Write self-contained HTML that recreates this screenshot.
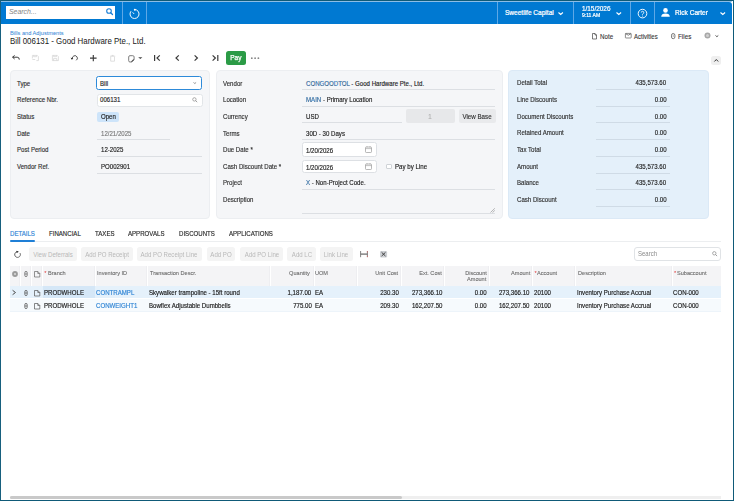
<!DOCTYPE html>
<html><head><meta charset="utf-8">
<style>
*{box-sizing:border-box;margin:0;padding:0}
html,body{width:734px;height:501px;overflow:hidden;background:#fff}
body{position:relative;font-family:"Liberation Sans",sans-serif;color:#222}
.t{position:absolute;white-space:nowrap;line-height:normal}
.r{position:absolute}
svg.r{overflow:visible}
</style></head><body>
<div class="r" style="left:1.00px;top:1.00px;width:731.00px;height:1.00px;background:#8cbde6;border-top-right-radius:4px"></div><div class="r" style="left:1.00px;top:2.00px;width:731.00px;height:21.50px;background:#0079d2;border-top-right-radius:3px"></div><div class="r" style="left:6.00px;top:6.00px;width:109.00px;height:13.00px;background:#fff"></div><div class="t" style="left:8.80px;top:6.91px;font-size:7.75px;color:#8a8a8a;-webkit-text-stroke:0.05px #8a8a8a;transform:scaleX(0.890);transform-origin:0 0;font-style:italic">Search...</div><svg class="r" style="left:106.00px;top:8.20px" width="7" height="7" viewBox="0 0 7 7"><circle cx="3" cy="3" r="2.3" fill="none" stroke="#1a7fd6" stroke-width="1.1"/><path d="M4.7 4.7 L6.5 6.5" stroke="#1a7fd6" stroke-width="1.3" stroke-linecap="round"/></svg><div class="r" style="left:122.00px;top:1.50px;width:1.00px;height:22.00px;background:#5ea8e6"></div><div class="r" style="left:145.50px;top:1.50px;width:1.00px;height:22.00px;background:#5ea8e6"></div><div class="r" style="left:497.40px;top:1.50px;width:1.00px;height:22.00px;background:#5ea8e6"></div><div class="r" style="left:573.30px;top:1.50px;width:1.00px;height:22.00px;background:#5ea8e6"></div><div class="r" style="left:629.80px;top:1.50px;width:1.00px;height:22.00px;background:#5ea8e6"></div><div class="r" style="left:653.50px;top:1.50px;width:1.00px;height:22.00px;background:#5ea8e6"></div><svg class="r" style="left:127.80px;top:7.65px" width="12" height="12" viewBox="0 0 12 12"><path d="M3.0 3.2 A4.5 4.5 0 1 0 6.6 1.5" fill="none" stroke="#fff" stroke-width="0.95"/><circle cx="6.8" cy="1.7" r="0.95" fill="#fff"/><path d="M6.2 6.0 L4.6 4.3" stroke="#fff" stroke-width="0.9"/></svg><div class="t" style="left:505.20px;top:8.96px;font-size:6.61px;color:#fff;-webkit-text-stroke:0.22px #fff;transform:scaleX(0.990);transform-origin:0 0;">Sweetlife Capital</div><svg class="r" style="left:558.20px;top:12.20px" width="5.4" height="3.0" viewBox="0 0 5.4 3.0"><path d="M0.5 0.5 L2.7 2.5 L4.9 0.5" fill="none" stroke="#fff" stroke-width="1.1"/></svg><div class="t" style="left:581.90px;top:4.80px;font-size:6.45px;color:#fff;-webkit-text-stroke:0.2px #fff;transform:translateZ(0);">1/15/2026</div><div class="t" style="left:581.90px;top:12.43px;font-size:5.10px;color:#fff;-webkit-text-stroke:0.2px #fff;transform:translateZ(0);">9:11 AM</div><svg class="r" style="left:616.00px;top:12.30px" width="5.6" height="3.0" viewBox="0 0 5.6 3.0"><path d="M0.5 0.5 L2.8 2.5 L5.1 0.5" fill="none" stroke="#fff" stroke-width="1.1"/></svg><svg class="r" style="left:637.30px;top:7.50px" width="11" height="11" viewBox="0 0 11 11"><circle cx="5.5" cy="5.6" r="4.3" fill="none" stroke="#fff" stroke-width="0.95"/><path d="M4.3 4.5 A1.25 1.25 0 1 1 5.9 5.7 L5.5 6.1 L5.5 6.8" fill="none" stroke="#fff" stroke-width="0.85"/><circle cx="5.5" cy="7.9" r="0.5" fill="#fff"/></svg><svg class="r" style="left:661.00px;top:7.50px" width="9" height="9" viewBox="0 0 9 9"><circle cx="4.5" cy="2.4" r="2.3" fill="#fff"/><path d="M0.2 8.8 Q0.4 5.6 4.5 5.6 Q8.6 5.6 8.8 8.8 Z" fill="#fff"/></svg><div class="t" style="left:675.00px;top:8.96px;font-size:6.60px;color:#fff;-webkit-text-stroke:0.22px #fff;transform:translateZ(0);">Rick Carter</div><svg class="r" style="left:719.80px;top:11.50px" width="5.6" height="3.0" viewBox="0 0 5.6 3.0"><path d="M0.5 0.5 L2.8 2.5 L5.1 0.5" fill="none" stroke="#fff" stroke-width="1.1"/></svg><div class="t" style="left:9.60px;top:29.32px;font-size:6.21px;color:#3b8bd8;-webkit-text-stroke:0.05px #3b8bd8;transform:scaleX(0.910);transform-origin:0 0;">Bills and Adjustments</div><div class="t" style="left:9.50px;top:36.09px;font-size:8.32px;color:#222;-webkit-text-stroke:0.03px #222;transform:scaleX(0.950);transform-origin:0 0;">Bill 006131 - Good Hardware Pte., Ltd.</div><svg class="r" style="left:591.50px;top:32.60px" width="5" height="6.5" viewBox="0 0 5 6.5"><path d="M0.5 0.5 H3 L4.5 2 V6 H0.5 Z M3 0.5 V2 H4.5" fill="none" stroke="#444" stroke-width="0.7"/></svg><div class="t" style="left:599.70px;top:32.60px;font-size:6.67px;color:#333;-webkit-text-stroke:0.1px #333;transform:scaleX(0.930);transform-origin:0 0;">Note</div><svg class="r" style="left:625.30px;top:33.20px" width="6.6" height="5.4" viewBox="0 0 6.6 5.4"><rect x="0.4" y="0.4" width="5.8" height="4.6" rx="0.5" fill="none" stroke="#666" stroke-width="0.75"/><path d="M0.6 0.7 L3.3 2.2 L6.0 0.7" fill="none" stroke="#555" stroke-width="0.75"/></svg><div class="t" style="left:633.50px;top:32.80px;font-size:6.45px;color:#333;-webkit-text-stroke:0.1px #333;transform:scaleX(0.930);transform-origin:0 0;">Activities</div><svg class="r" style="left:671.30px;top:33.00px" width="4.5" height="6" viewBox="0 0 4.5 6"><rect x="0.5" y="0.5" width="3.4" height="5.2" rx="1.7" fill="none" stroke="#666" stroke-width="0.85"/><path d="M2.2 1.6 V4.0" stroke="#777" stroke-width="0.6"/></svg><div class="t" style="left:678.10px;top:32.50px;font-size:6.77px;color:#333;-webkit-text-stroke:0.1px #333;transform:scaleX(0.930);transform-origin:0 0;">Files</div><svg class="r" style="left:703.90px;top:32.40px" width="7" height="7" viewBox="0 0 7 7"><circle cx="3.5" cy="3.5" r="3.0" fill="#a8a8a8"/><circle cx="3.5" cy="3.5" r="1.5" fill="#d0d0d0"/></svg><svg class="r" style="left:714.50px;top:35.00px" width="3.8" height="2.2" viewBox="0 0 3.8 2.2"><path d="M0.5 0.5 L1.9 1.7000000000000002 L3.3 0.5" fill="none" stroke="#555" stroke-width="1.0"/></svg><svg class="r" style="left:12.40px;top:55.20px" width="8" height="5.5" viewBox="0 0 8 5.5"><path d="M2.6 0.4 L0.6 2.2 L2.6 4.0 M0.6 2.2 H5.2 Q7.3 2.2 7.3 4.6" fill="none" stroke="#3a3a3a" stroke-width="1"/></svg><svg class="r" style="left:32.00px;top:54.90px" width="7" height="6" viewBox="0 0 7 6"><path d="M0.4 3.4 V0.4 H5.2 L6.4 1.6 V5.6 H4.4 M1.6 0.4 V1.7 H4.6 V0.4 M0.4 4.5 H3.2" fill="none" stroke="#d4d4d4" stroke-width="0.75"/></svg><svg class="r" style="left:51.60px;top:54.90px" width="7" height="6" viewBox="0 0 7 6"><path d="M0.4 0.4 H5.2 L6.4 1.6 V5.6 H0.4 Z M1.6 0.4 V1.7 H4.6 V0.4 M1.6 5.6 V3.6 H4.8 V5.6" fill="none" stroke="#d4d4d4" stroke-width="0.75"/></svg><svg class="r" style="left:70.20px;top:54.90px" width="8" height="6" viewBox="0 0 8 6"><path d="M2.5 3.9 A2.5 2.5 0 1 1 6.2 5.3" fill="none" stroke="#555" stroke-width="1.0"/><path d="M0.7 2.6 L1.4 4.5 L3.3 4.0 Z" fill="#222"/></svg><svg class="r" style="left:89.80px;top:54.90px" width="6.6" height="6.2" viewBox="0 0 6.6 6.2"><path d="M3.3 0 V6.2 M0 3.1 H6.6" stroke="#3a3a3a" stroke-width="1.15"/></svg><svg class="r" style="left:109.90px;top:54.90px" width="5.2" height="6.6" viewBox="0 0 5.2 6.6"><path d="M0 1.2 H5.2 M1.9 1.2 V0.4 H3.3 V1.2 M0.7 1.8 V6.2 H4.5 V1.8" fill="none" stroke="#d4d4d4" stroke-width="0.75"/></svg><svg class="r" style="left:128.20px;top:54.80px" width="7" height="7.6" viewBox="0 0 7 7.6"><path d="M0.7 1.9 Q0.7 0.7 2.0 0.7 H4.8 Q6.1 0.7 6.1 1.9 V4.7 L3.6 7.0 H2.0 Q0.7 7.0 0.7 5.8 Z" fill="none" stroke="#777" stroke-width="0.95"/><path d="M6.1 4.7 Q4.0 4.9 3.6 7.0" fill="none" stroke="#333" stroke-width="0.9"/></svg><svg class="r" style="left:138.40px;top:56.80px" width="4.6" height="2.2" viewBox="0 0 4.6 2.2"><path d="M0.2 0.2 L2.3 2.0 L4.4 0.2 Z" fill="#444"/></svg><svg class="r" style="left:154.00px;top:54.90px" width="7" height="6" viewBox="0 0 7 6"><path d="M0.6 0 V6 M5.8 0.4 L3 3 L5.8 5.6" fill="none" stroke="#3a3a3a" stroke-width="1.2"/></svg><svg class="r" style="left:174.50px;top:54.90px" width="4.5" height="6" viewBox="0 0 4.5 6"><path d="M3.8 0.4 L1 3 L3.8 5.6" fill="none" stroke="#3a3a3a" stroke-width="1.2"/></svg><svg class="r" style="left:193.50px;top:54.90px" width="4.5" height="6" viewBox="0 0 4.5 6"><path d="M0.6 0.4 L3.4 3 L0.6 5.6" fill="none" stroke="#3a3a3a" stroke-width="1.2"/></svg><svg class="r" style="left:212.00px;top:54.90px" width="7" height="6" viewBox="0 0 7 6"><path d="M0.6 0.4 L3.4 3 L0.6 5.6 M5.8 0 V6" fill="none" stroke="#3a3a3a" stroke-width="1.2"/></svg><div class="r" style="left:226.30px;top:51.10px;width:19.50px;height:13.80px;background:#2b9b46;border-radius:2.5px"></div><div class="t" style="left:135.90px;width:200px;text-align:center;top:54.25px;font-size:6.50px;color:#fff;-webkit-text-stroke:0.25px #fff;transform:translateZ(0);">Pay</div><svg class="r" style="left:250.00px;top:57.00px" width="10" height="2.4" viewBox="0 0 10 2.4"><circle cx="1.8" cy="1.2" r="0.9" fill="#858585"/><circle cx="5.1" cy="1.2" r="0.9" fill="#858585"/><circle cx="8.4" cy="1.2" r="0.9" fill="#858585"/></svg><div class="r" style="left:710.70px;top:56.00px;width:10.70px;height:8.70px;background:#efefef;border-radius:2.5px"></div><svg class="r" style="left:713.70px;top:58.80px" width="4.6" height="2.8" viewBox="0 0 4.6 2.8"><path d="M0.4 2.5 L2.3 0.5 L4.2 2.5" fill="none" stroke="#333" stroke-width="1"/></svg><div class="r" style="left:10.00px;top:70.00px;width:200.20px;height:149.00px;background:#f5f6f8;border:1px solid #eceef1;border-radius:4px"></div><div class="r" style="left:215.60px;top:70.00px;width:287.30px;height:149.00px;background:#f5f6f8;border:1px solid #eceef1;border-radius:4px"></div><div class="r" style="left:508.20px;top:70.00px;width:200.80px;height:149.00px;background:#e4f0fa;border:1px solid #dbe9f6;border-radius:4px"></div><div class="t" style="left:17.10px;top:79.58px;font-size:7.01px;color:#2f2f2f;-webkit-text-stroke:0.15px #2f2f2f;transform:scaleX(0.870);transform-origin:0 0;">Type</div><div class="t" style="left:17.10px;top:96.26px;font-size:7.01px;color:#2f2f2f;-webkit-text-stroke:0.15px #2f2f2f;transform:scaleX(0.870);transform-origin:0 0;">Reference Nbr.</div><div class="t" style="left:17.10px;top:112.94px;font-size:7.01px;color:#2f2f2f;-webkit-text-stroke:0.15px #2f2f2f;transform:scaleX(0.870);transform-origin:0 0;">Status</div><div class="t" style="left:17.10px;top:129.62px;font-size:7.01px;color:#2f2f2f;-webkit-text-stroke:0.15px #2f2f2f;transform:scaleX(0.870);transform-origin:0 0;">Date</div><div class="t" style="left:17.10px;top:146.30px;font-size:7.01px;color:#2f2f2f;-webkit-text-stroke:0.15px #2f2f2f;transform:scaleX(0.870);transform-origin:0 0;">Post Period</div><div class="t" style="left:17.10px;top:162.98px;font-size:7.01px;color:#2f2f2f;-webkit-text-stroke:0.15px #2f2f2f;transform:scaleX(0.870);transform-origin:0 0;">Vendor Ref.</div><div class="r" style="left:96.30px;top:76.00px;width:106.20px;height:13.80px;background:#fff;border:1px solid #2d8ad9;border-radius:2.5px"></div><div class="t" style="left:100.40px;top:79.58px;font-size:7.01px;color:#1c1c1c;-webkit-text-stroke:0.15px #1c1c1c;transform:scaleX(0.870);transform-origin:0 0;">Bill</div><svg class="r" style="left:193.20px;top:82.20px" width="3.6" height="2.0" viewBox="0 0 3.6 2.0"><path d="M0.5 0.5 L1.8 1.5 L3.1 0.5" fill="none" stroke="#666" stroke-width="0.7"/></svg><div class="r" style="left:96.50px;top:93.50px;width:106.00px;height:13.00px;background:#fff;border:1px solid #e2e5e8;border-radius:2.5px"></div><div class="t" style="left:100.40px;top:96.26px;font-size:7.01px;color:#1c1c1c;-webkit-text-stroke:0.15px #1c1c1c;transform:scaleX(0.870);transform-origin:0 0;">006131</div><svg class="r" style="left:192.30px;top:96.80px" width="6" height="6" viewBox="0 0 6 6"><circle cx="2.4" cy="2.4" r="1.7" fill="none" stroke="#888" stroke-width="0.7"/><path d="M3.6 3.6 L5.2 5.2" stroke="#888" stroke-width="0.8"/></svg><div class="r" style="left:96.90px;top:111.50px;width:21.70px;height:10.40px;background:#cde4fa;border-radius:2px"></div><div class="t" style="left:100.60px;top:112.94px;font-size:7.01px;color:#1c1c1c;-webkit-text-stroke:0.15px #1c1c1c;transform:scaleX(0.870);transform-origin:0 0;">Open</div><div class="t" style="left:100.60px;top:129.62px;font-size:7.01px;color:#7a7a7a;-webkit-text-stroke:0.15px #7a7a7a;transform:scaleX(0.870);transform-origin:0 0;">12/21/2025</div><div class="r" style="left:96.90px;top:139.30px;width:73.10px;height:0.80px;background:#dcdfe3"></div><div class="t" style="left:100.60px;top:146.30px;font-size:7.01px;color:#1c1c1c;-webkit-text-stroke:0.15px #1c1c1c;transform:scaleX(0.870);transform-origin:0 0;">12-2025</div><div class="r" style="left:96.90px;top:156.10px;width:105.60px;height:0.80px;background:#dcdfe3"></div><div class="t" style="left:100.60px;top:162.98px;font-size:7.01px;color:#1c1c1c;-webkit-text-stroke:0.15px #1c1c1c;transform:scaleX(0.870);transform-origin:0 0;">PO002901</div><div class="r" style="left:96.90px;top:172.50px;width:105.60px;height:0.80px;background:#dcdfe3"></div><div class="t" style="left:222.80px;top:79.58px;font-size:7.01px;color:#2f2f2f;-webkit-text-stroke:0.15px #2f2f2f;transform:scaleX(0.870);transform-origin:0 0;">Vendor</div><div class="t" style="left:222.80px;top:96.26px;font-size:7.01px;color:#2f2f2f;-webkit-text-stroke:0.15px #2f2f2f;transform:scaleX(0.870);transform-origin:0 0;">Location</div><div class="t" style="left:222.80px;top:112.94px;font-size:7.01px;color:#2f2f2f;-webkit-text-stroke:0.15px #2f2f2f;transform:scaleX(0.870);transform-origin:0 0;">Currency</div><div class="t" style="left:222.80px;top:129.62px;font-size:7.01px;color:#2f2f2f;-webkit-text-stroke:0.15px #2f2f2f;transform:scaleX(0.870);transform-origin:0 0;">Terms</div><div class="t" style="left:222.80px;top:146.30px;font-size:7.01px;color:#2f2f2f;-webkit-text-stroke:0.15px #2f2f2f;transform:scaleX(0.870);transform-origin:0 0;">Due Date *</div><div class="t" style="left:222.80px;top:162.98px;font-size:7.01px;color:#2f2f2f;-webkit-text-stroke:0.15px #2f2f2f;transform:scaleX(0.870);transform-origin:0 0;">Cash Discount Date *</div><div class="t" style="left:222.80px;top:178.86px;font-size:7.01px;color:#2f2f2f;-webkit-text-stroke:0.15px #2f2f2f;transform:scaleX(0.870);transform-origin:0 0;">Project</div><div class="t" style="left:222.80px;top:196.34px;font-size:7.01px;color:#2f2f2f;-webkit-text-stroke:0.15px #2f2f2f;transform:scaleX(0.870);transform-origin:0 0;">Description</div><div class="t" style="left:306.20px;top:79.58px;font-size:7.01px;color:#1c1c1c;-webkit-text-stroke:0.15px #1c1c1c;transform:scaleX(0.870);transform-origin:0 0;"><span style="color:#3a92e2">CONGOODTOL</span> - Good Hardware Pte., Ltd.</div><div class="r" style="left:301.60px;top:88.90px;width:193.80px;height:0.80px;background:#dcdfe3"></div><div class="t" style="left:306.20px;top:96.26px;font-size:7.01px;color:#1c1c1c;-webkit-text-stroke:0.15px #1c1c1c;transform:scaleX(0.870);transform-origin:0 0;"><span style="color:#3a92e2">MAIN</span> - Primary Location</div><div class="r" style="left:301.60px;top:105.90px;width:193.80px;height:0.80px;background:#dcdfe3"></div><div class="t" style="left:306.20px;top:112.94px;font-size:7.01px;color:#1c1c1c;-webkit-text-stroke:0.15px #1c1c1c;transform:scaleX(0.870);transform-origin:0 0;">USD</div><div class="r" style="left:301.60px;top:122.20px;width:100.40px;height:0.80px;background:#dcdfe3"></div><div class="r" style="left:405.60px;top:109.30px;width:49.40px;height:13.70px;background:#e7e8ea;border-radius:2px"></div><div class="t" style="left:330.30px;width:200px;text-align:center;top:112.94px;font-size:7.01px;color:#b0b0b0;-webkit-text-stroke:0.15px #b0b0b0;transform:scaleX(0.870);transform-origin:50% 0;">1</div><div class="r" style="left:458.70px;top:109.30px;width:37.00px;height:13.70px;background:#e9eaec;border-radius:2px"></div><div class="t" style="left:377.20px;width:200px;text-align:center;top:112.84px;font-size:7.13px;color:#333;-webkit-text-stroke:0.15px #333;transform:scaleX(0.870);transform-origin:50% 0;">View Base</div><div class="t" style="left:306.20px;top:129.62px;font-size:7.01px;color:#1c1c1c;-webkit-text-stroke:0.15px #1c1c1c;transform:scaleX(0.870);transform-origin:0 0;">30D - 30 Days</div><div class="r" style="left:301.60px;top:139.00px;width:193.80px;height:0.80px;background:#dcdfe3"></div><div class="r" style="left:301.90px;top:142.40px;width:74.70px;height:14.20px;background:#fff;border:1px solid #dde0e4;border-radius:2.5px"></div><div class="t" style="left:306.00px;top:147.00px;font-size:7.01px;color:#1c1c1c;-webkit-text-stroke:0.15px #1c1c1c;transform:scaleX(0.870);transform-origin:0 0;">1/20/2026</div><svg class="r" style="left:365.00px;top:145.70px" width="7" height="7" viewBox="0 0 7 7"><rect x="0.5" y="1" width="6" height="5.5" rx="0.8" fill="none" stroke="#999" stroke-width="0.7"/><path d="M0.5 2.6 H6.5 M2 0.2 V1.4 M5 0.2 V1.4" stroke="#999" stroke-width="0.6"/></svg><div class="r" style="left:301.90px;top:159.50px;width:74.70px;height:13.90px;background:#fff;border:1px solid #dde0e4;border-radius:2.5px"></div><div class="t" style="left:306.00px;top:163.68px;font-size:7.01px;color:#1c1c1c;-webkit-text-stroke:0.15px #1c1c1c;transform:scaleX(0.870);transform-origin:0 0;">1/20/2026</div><svg class="r" style="left:365.00px;top:162.80px" width="7" height="7" viewBox="0 0 7 7"><rect x="0.5" y="1" width="6" height="5.5" rx="0.8" fill="none" stroke="#999" stroke-width="0.7"/><path d="M0.5 2.6 H6.5 M2 0.2 V1.4 M5 0.2 V1.4" stroke="#999" stroke-width="0.6"/></svg><div class="r" style="left:386.00px;top:163.70px;width:5.50px;height:5.60px;background:#fff;border:0.7px solid #cfd3d7;border-radius:1px"></div><div class="t" style="left:394.80px;top:162.93px;font-size:7.07px;color:#1c1c1c;-webkit-text-stroke:0.15px #1c1c1c;transform:scaleX(0.870);transform-origin:0 0;">Pay by Line</div><div class="t" style="left:306.20px;top:178.86px;font-size:7.01px;color:#1c1c1c;-webkit-text-stroke:0.15px #1c1c1c;transform:scaleX(0.870);transform-origin:0 0;"><span style="color:#3a92e2">X</span> - Non-Project Code.</div><div class="r" style="left:301.60px;top:188.90px;width:193.80px;height:0.80px;background:#dcdfe3"></div><div class="r" style="left:301.60px;top:212.60px;width:193.80px;height:0.80px;background:#dcdfe3"></div><svg class="r" style="left:490.00px;top:207.80px" width="5.5" height="5" viewBox="0 0 5.5 5"><path d="M0.5 4.5 L4.8 0.3 M2.5 4.6 L4.8 2.4" stroke="#888" stroke-width="0.6"/></svg><div class="t" style="left:516.60px;top:79.18px;font-size:7.01px;color:#2f2f2f;-webkit-text-stroke:0.15px #2f2f2f;transform:scaleX(0.870);transform-origin:0 0;">Detail Total</div><div class="t" style="right:67.80px;top:79.18px;font-size:7.01px;color:#1c1c1c;-webkit-text-stroke:0.15px #1c1c1c;transform:scaleX(0.870);transform-origin:100% 0;">435,573.60</div><div class="r" style="left:595.70px;top:89.10px;width:74.40px;height:0.80px;background:#cfdbe6"></div><div class="t" style="left:516.60px;top:95.86px;font-size:7.01px;color:#2f2f2f;-webkit-text-stroke:0.15px #2f2f2f;transform:scaleX(0.870);transform-origin:0 0;">Line Discounts</div><div class="t" style="right:67.80px;top:95.86px;font-size:7.01px;color:#1c1c1c;-webkit-text-stroke:0.15px #1c1c1c;transform:scaleX(0.870);transform-origin:100% 0;">0.00</div><div class="r" style="left:595.70px;top:105.78px;width:74.40px;height:0.80px;background:#cfdbe6"></div><div class="t" style="left:516.60px;top:112.54px;font-size:7.01px;color:#2f2f2f;-webkit-text-stroke:0.15px #2f2f2f;transform:scaleX(0.870);transform-origin:0 0;">Document Discounts</div><div class="t" style="right:67.80px;top:112.54px;font-size:7.01px;color:#1c1c1c;-webkit-text-stroke:0.15px #1c1c1c;transform:scaleX(0.870);transform-origin:100% 0;">0.00</div><div class="r" style="left:595.70px;top:122.46px;width:74.40px;height:0.80px;background:#cfdbe6"></div><div class="t" style="left:516.60px;top:129.22px;font-size:7.01px;color:#2f2f2f;-webkit-text-stroke:0.15px #2f2f2f;transform:scaleX(0.870);transform-origin:0 0;">Retained Amount</div><div class="t" style="right:67.80px;top:129.22px;font-size:7.01px;color:#1c1c1c;-webkit-text-stroke:0.15px #1c1c1c;transform:scaleX(0.870);transform-origin:100% 0;">0.00</div><div class="r" style="left:595.70px;top:139.14px;width:74.40px;height:0.80px;background:#cfdbe6"></div><div class="t" style="left:516.60px;top:145.90px;font-size:7.01px;color:#2f2f2f;-webkit-text-stroke:0.15px #2f2f2f;transform:scaleX(0.870);transform-origin:0 0;">Tax Total</div><div class="t" style="right:67.80px;top:145.90px;font-size:7.01px;color:#1c1c1c;-webkit-text-stroke:0.15px #1c1c1c;transform:scaleX(0.870);transform-origin:100% 0;">0.00</div><div class="r" style="left:595.70px;top:155.82px;width:74.40px;height:0.80px;background:#cfdbe6"></div><div class="t" style="left:516.60px;top:162.58px;font-size:7.01px;color:#2f2f2f;-webkit-text-stroke:0.15px #2f2f2f;transform:scaleX(0.870);transform-origin:0 0;">Amount</div><div class="t" style="right:67.80px;top:162.58px;font-size:7.01px;color:#1c1c1c;-webkit-text-stroke:0.15px #1c1c1c;transform:scaleX(0.870);transform-origin:100% 0;">435,573.60</div><div class="r" style="left:595.70px;top:172.50px;width:74.40px;height:0.80px;background:#cfdbe6"></div><div class="t" style="left:516.60px;top:179.26px;font-size:7.01px;color:#2f2f2f;-webkit-text-stroke:0.15px #2f2f2f;transform:scaleX(0.870);transform-origin:0 0;">Balance</div><div class="t" style="right:67.80px;top:179.26px;font-size:7.01px;color:#1c1c1c;-webkit-text-stroke:0.15px #1c1c1c;transform:scaleX(0.870);transform-origin:100% 0;">435,573.60</div><div class="r" style="left:595.70px;top:189.18px;width:74.40px;height:0.80px;background:#cfdbe6"></div><div class="t" style="left:516.60px;top:195.94px;font-size:7.01px;color:#2f2f2f;-webkit-text-stroke:0.15px #2f2f2f;transform:scaleX(0.870);transform-origin:0 0;">Cash Discount</div><div class="t" style="right:67.80px;top:195.94px;font-size:7.01px;color:#1c1c1c;-webkit-text-stroke:0.15px #1c1c1c;transform:scaleX(0.870);transform-origin:100% 0;">0.00</div><div class="r" style="left:595.70px;top:205.86px;width:74.40px;height:0.80px;background:#cfdbe6"></div><div class="t" style="left:9.50px;top:230.38px;font-size:7.01px;color:#2e83d6;-webkit-text-stroke:0.15px #2e83d6;transform:scaleX(0.870);transform-origin:0 0;">DETAILS</div><div class="t" style="left:48.60px;top:230.38px;font-size:7.01px;color:#2a2a2a;-webkit-text-stroke:0.15px #2a2a2a;transform:scaleX(0.870);transform-origin:0 0;">FINANCIAL</div><div class="t" style="left:94.80px;top:230.38px;font-size:7.01px;color:#2a2a2a;-webkit-text-stroke:0.15px #2a2a2a;transform:scaleX(0.870);transform-origin:0 0;">TAXES</div><div class="t" style="left:128.30px;top:230.38px;font-size:7.01px;color:#2a2a2a;-webkit-text-stroke:0.15px #2a2a2a;transform:scaleX(0.870);transform-origin:0 0;">APPROVALS</div><div class="t" style="left:178.90px;top:230.38px;font-size:7.01px;color:#2a2a2a;-webkit-text-stroke:0.15px #2a2a2a;transform:scaleX(0.870);transform-origin:0 0;">DISCOUNTS</div><div class="t" style="left:229.00px;top:230.38px;font-size:7.01px;color:#2a2a2a;-webkit-text-stroke:0.15px #2a2a2a;transform:scaleX(0.870);transform-origin:0 0;">APPLICATIONS</div><div class="r" style="left:9.50px;top:241.00px;width:711.80px;height:0.80px;background:#eceef0"></div><div class="r" style="left:9.50px;top:240.10px;width:25.50px;height:1.80px;background:#1f7fd6;border-radius:1px"></div><svg class="r" style="left:14.00px;top:250.80px" width="7" height="7" viewBox="0 0 7 7"><path d="M3.5 0.7 A2.85 2.85 0 1 0 6.0 2.1" fill="none" stroke="#666" stroke-width="1"/><path d="M2.4 -0.2 L4.9 0.8 L2.6 2.0 Z" fill="#222"/></svg><div class="r" style="left:29.30px;top:247.40px;width:47.70px;height:13.60px;background:#f4f4f4;border-radius:2.5px"></div><div class="t" style="left:-46.85px;width:200px;text-align:center;top:250.88px;font-size:7.01px;color:#b8b8b8;transform:scaleX(0.870);transform-origin:50% 0;">View Deferrals</div><div class="r" style="left:80.70px;top:247.40px;width:52.50px;height:13.60px;background:#f4f4f4;border-radius:2.5px"></div><div class="t" style="left:6.95px;width:200px;text-align:center;top:250.88px;font-size:7.01px;color:#b8b8b8;transform:scaleX(0.870);transform-origin:50% 0;">Add PO Receipt</div><div class="r" style="left:137.00px;top:247.40px;width:64.80px;height:13.60px;background:#f4f4f4;border-radius:2.5px"></div><div class="t" style="left:69.40px;width:200px;text-align:center;top:250.88px;font-size:7.01px;color:#b8b8b8;transform:scaleX(0.870);transform-origin:50% 0;">Add PO Receipt Line</div><div class="r" style="left:206.80px;top:247.40px;width:28.60px;height:13.60px;background:#f4f4f4;border-radius:2.5px"></div><div class="t" style="left:121.10px;width:200px;text-align:center;top:250.88px;font-size:7.01px;color:#b8b8b8;transform:scaleX(0.870);transform-origin:50% 0;">Add PO</div><div class="r" style="left:240.30px;top:247.40px;width:42.80px;height:13.60px;background:#f4f4f4;border-radius:2.5px"></div><div class="t" style="left:161.70px;width:200px;text-align:center;top:250.88px;font-size:7.01px;color:#b8b8b8;transform:scaleX(0.870);transform-origin:50% 0;">Add PO Line</div><div class="r" style="left:287.20px;top:247.40px;width:28.60px;height:13.60px;background:#f4f4f4;border-radius:2.5px"></div><div class="t" style="left:201.50px;width:200px;text-align:center;top:250.88px;font-size:7.01px;color:#b8b8b8;transform:scaleX(0.870);transform-origin:50% 0;">Add LC</div><div class="r" style="left:320.20px;top:247.40px;width:32.40px;height:13.60px;background:#f4f4f4;border-radius:2.5px"></div><div class="t" style="left:236.40px;width:200px;text-align:center;top:250.88px;font-size:7.01px;color:#b8b8b8;transform:scaleX(0.870);transform-origin:50% 0;">Link Line</div><svg class="r" style="left:360.00px;top:250.90px" width="8" height="6.2" viewBox="0 0 8 6.2"><path d="M0.6 0 V6.2 M7.4 0 V6.2" stroke="#777" stroke-width="0.9"/><path d="M0.6 3.1 H7.4" stroke="#666" stroke-width="1.2"/><path d="M7.4 0.4 V1.4 M7.4 4.8 V5.8" stroke="#e06060" stroke-width="0.9"/></svg><svg class="r" style="left:380.00px;top:250.90px" width="7.1" height="6.4" viewBox="0 0 7.1 6.4"><rect x="0" y="0" width="7.1" height="6.4" rx="1.2" fill="#cdd0d4"/><path d="M1.6 1.3 L5.5 5.1 M5.5 1.3 L1.6 5.1" stroke="#333" stroke-width="0.9"/></svg><div class="r" style="left:634.30px;top:247.10px;width:87.00px;height:13.60px;background:#fff;border:1px solid #e0e3e6;border-radius:3px"></div><div class="t" style="left:637.60px;top:249.89px;font-size:6.90px;color:#8a8a8a;transform:scaleX(0.870);transform-origin:0 0;">Search</div><svg class="r" style="left:712.20px;top:251.00px" width="6" height="6" viewBox="0 0 6 6"><circle cx="2.3" cy="2.3" r="1.7" fill="none" stroke="#888" stroke-width="0.7"/><path d="M3.5 3.5 L5.1 5.1" stroke="#888" stroke-width="0.8"/></svg><div class="r" style="left:9.80px;top:265.90px;width:711.40px;height:20.30px;background:#f4f4f6"></div><div class="r" style="left:9.80px;top:286.20px;width:711.40px;height:12.30px;background:#e5f1fb"></div><div class="r" style="left:42.50px;top:286.20px;width:52.30px;height:12.30px;background:#d5e7f7"></div><div class="r" style="left:9.80px;top:299.00px;width:711.40px;height:13.20px;background:#f6fafd;border-bottom:1px solid #edf4fa"></div><div class="r" style="left:19.10px;top:265.90px;width:1.00px;height:20.30px;background:#eeeef1"></div><div class="r" style="left:20.10px;top:265.90px;width:0.80px;height:20.30px;background:#ffffff"></div><div class="r" style="left:30.40px;top:265.90px;width:1.00px;height:20.30px;background:#eeeef1"></div><div class="r" style="left:31.40px;top:265.90px;width:0.80px;height:20.30px;background:#ffffff"></div><div class="r" style="left:41.30px;top:265.90px;width:1.00px;height:20.30px;background:#eeeef1"></div><div class="r" style="left:42.30px;top:265.90px;width:0.80px;height:20.30px;background:#ffffff"></div><div class="r" style="left:93.80px;top:265.90px;width:1.00px;height:20.30px;background:#eeeef1"></div><div class="r" style="left:94.80px;top:265.90px;width:0.80px;height:20.30px;background:#ffffff"></div><div class="r" style="left:145.90px;top:265.90px;width:1.00px;height:20.30px;background:#eeeef1"></div><div class="r" style="left:146.90px;top:265.90px;width:0.80px;height:20.30px;background:#ffffff"></div><div class="r" style="left:269.20px;top:265.90px;width:1.00px;height:20.30px;background:#eeeef1"></div><div class="r" style="left:270.20px;top:265.90px;width:0.80px;height:20.30px;background:#ffffff"></div><div class="r" style="left:312.80px;top:265.90px;width:1.00px;height:20.30px;background:#eeeef1"></div><div class="r" style="left:313.80px;top:265.90px;width:0.80px;height:20.30px;background:#ffffff"></div><div class="r" style="left:355.60px;top:265.90px;width:1.00px;height:20.30px;background:#eeeef1"></div><div class="r" style="left:356.60px;top:265.90px;width:0.80px;height:20.30px;background:#ffffff"></div><div class="r" style="left:399.90px;top:265.90px;width:1.00px;height:20.30px;background:#eeeef1"></div><div class="r" style="left:400.90px;top:265.90px;width:0.80px;height:20.30px;background:#ffffff"></div><div class="r" style="left:443.40px;top:265.90px;width:1.00px;height:20.30px;background:#eeeef1"></div><div class="r" style="left:444.40px;top:265.90px;width:0.80px;height:20.30px;background:#ffffff"></div><div class="r" style="left:487.50px;top:265.90px;width:1.00px;height:20.30px;background:#eeeef1"></div><div class="r" style="left:488.50px;top:265.90px;width:0.80px;height:20.30px;background:#ffffff"></div><div class="r" style="left:531.20px;top:265.90px;width:1.00px;height:20.30px;background:#eeeef1"></div><div class="r" style="left:532.20px;top:265.90px;width:0.80px;height:20.30px;background:#ffffff"></div><div class="r" style="left:574.40px;top:265.90px;width:1.00px;height:20.30px;background:#eeeef1"></div><div class="r" style="left:575.40px;top:265.90px;width:0.80px;height:20.30px;background:#ffffff"></div><div class="r" style="left:671.20px;top:265.90px;width:1.00px;height:20.30px;background:#eeeef1"></div><div class="r" style="left:672.20px;top:265.90px;width:0.80px;height:20.30px;background:#ffffff"></div><svg class="r" style="left:11.90px;top:270.90px" width="6" height="6" viewBox="0 0 6 6"><circle cx="3" cy="3" r="2.9" fill="#9a9a9a"/><circle cx="3" cy="3" r="1.1" fill="#d6d6d6"/></svg><svg class="r" style="left:23.60px;top:271.00px" width="4" height="6.2" viewBox="0 0 4 6.2"><path d="M0.8 1.6 V4.4 A1.2 1.2 0 0 0 3.2 4.4 V1.6 A1.2 1.2 0 0 0 0.8 1.6 M2 1.8 V4.0" fill="none" stroke="#666" stroke-width="0.8"/></svg><svg class="r" style="left:33.70px;top:270.90px" width="6.5" height="6.5" viewBox="0 0 6.5 6.5"><path d="M0.5 0.5 H3.8 L5.8 2.5 V6 H0.5 Z M3.8 0.5 V2.5 H5.8" fill="none" stroke="#666" stroke-width="0.7"/></svg><div class="t" style="left:44.30px;top:270.18px;font-size:5.60px;color:#e03030;transform:translateZ(0);">*</div><div class="t" style="left:47.60px;top:269.91px;font-size:5.89px;color:#6c6c6c;-webkit-text-stroke:0.1px #6c6c6c;transform:scaleX(0.950);transform-origin:0 0;">Branch</div><div class="t" style="left:97.00px;top:269.91px;font-size:5.89px;color:#6c6c6c;-webkit-text-stroke:0.1px #6c6c6c;transform:scaleX(0.950);transform-origin:0 0;">Inventory ID</div><div class="t" style="left:149.50px;top:269.91px;font-size:5.89px;color:#6c6c6c;-webkit-text-stroke:0.1px #6c6c6c;transform:scaleX(0.950);transform-origin:0 0;">Transaction Descr.</div><div class="t" style="right:423.70px;top:269.91px;font-size:5.89px;color:#6c6c6c;-webkit-text-stroke:0.1px #6c6c6c;transform:scaleX(0.950);transform-origin:100% 0;">Quantity</div><div class="t" style="left:315.20px;top:269.91px;font-size:5.89px;color:#6c6c6c;-webkit-text-stroke:0.1px #6c6c6c;transform:scaleX(0.950);transform-origin:0 0;">UOM</div><div class="t" style="right:335.50px;top:269.91px;font-size:5.89px;color:#6c6c6c;-webkit-text-stroke:0.1px #6c6c6c;transform:scaleX(0.950);transform-origin:100% 0;">Unit Cost</div><div class="t" style="right:291.70px;top:269.91px;font-size:5.89px;color:#6c6c6c;-webkit-text-stroke:0.1px #6c6c6c;transform:scaleX(0.950);transform-origin:100% 0;">Ext. Cost</div><div class="t" style="right:247.60px;top:269.91px;font-size:5.89px;color:#6c6c6c;-webkit-text-stroke:0.1px #6c6c6c;transform:scaleX(0.950);transform-origin:100% 0;">Discount</div><div class="t" style="right:247.60px;top:275.71px;font-size:5.89px;color:#6c6c6c;-webkit-text-stroke:0.1px #6c6c6c;transform:scaleX(0.950);transform-origin:100% 0;">Amount</div><div class="t" style="right:204.20px;top:269.91px;font-size:5.89px;color:#6c6c6c;-webkit-text-stroke:0.1px #6c6c6c;transform:scaleX(0.950);transform-origin:100% 0;">Amount</div><div class="t" style="left:534.40px;top:270.18px;font-size:5.60px;color:#e03030;transform:translateZ(0);">*</div><div class="t" style="left:536.90px;top:269.91px;font-size:5.89px;color:#6c6c6c;-webkit-text-stroke:0.1px #6c6c6c;transform:scaleX(0.950);transform-origin:0 0;">Account</div><div class="t" style="left:577.70px;top:269.91px;font-size:5.89px;color:#6c6c6c;-webkit-text-stroke:0.1px #6c6c6c;transform:scaleX(0.950);transform-origin:0 0;">Description</div><div class="t" style="left:674.00px;top:270.18px;font-size:5.60px;color:#e03030;transform:translateZ(0);">*</div><div class="t" style="left:676.60px;top:269.91px;font-size:5.89px;color:#6c6c6c;-webkit-text-stroke:0.1px #6c6c6c;transform:scaleX(0.950);transform-origin:0 0;">Subaccount</div><svg class="r" style="left:23.60px;top:290.30px" width="4" height="6.2" viewBox="0 0 4 6.2"><path d="M0.8 1.6 V4.4 A1.2 1.2 0 0 0 3.2 4.4 V1.6 A1.2 1.2 0 0 0 0.8 1.6 M2 1.8 V4.0" fill="none" stroke="#555" stroke-width="0.8"/></svg><svg class="r" style="left:33.70px;top:290.10px" width="6.5" height="6.5" viewBox="0 0 6.5 6.5"><path d="M0.5 0.5 H3.8 L5.8 2.5 V6 H0.5 Z M3.8 0.5 V2.5 H5.8" fill="none" stroke="#555" stroke-width="0.7"/></svg><div class="t" style="left:43.60px;top:288.96px;font-size:6.49px;color:#1a1a1a;-webkit-text-stroke:0.15px #1a1a1a;transform:scaleX(0.940);transform-origin:0 0;">PRODWHOLE</div><div class="t" style="left:95.90px;top:288.96px;font-size:6.49px;color:#2f84d4;-webkit-text-stroke:0.15px #2f84d4;transform:scaleX(0.940);transform-origin:0 0;">CONTRAMPL</div><div class="t" style="left:148.70px;top:288.96px;font-size:6.49px;color:#1a1a1a;-webkit-text-stroke:0.15px #1a1a1a;transform:scaleX(0.940);transform-origin:0 0;">Skywalker trampoline - 15ft round</div><div class="t" style="right:422.30px;top:288.96px;font-size:6.49px;color:#1a1a1a;-webkit-text-stroke:0.15px #1a1a1a;transform:scaleX(0.940);transform-origin:100% 0;">1,187.00</div><div class="t" style="left:315.20px;top:288.96px;font-size:6.49px;color:#1a1a1a;-webkit-text-stroke:0.15px #1a1a1a;transform:scaleX(0.940);transform-origin:0 0;">EA</div><div class="t" style="right:335.50px;top:288.96px;font-size:6.49px;color:#1a1a1a;-webkit-text-stroke:0.15px #1a1a1a;transform:scaleX(0.940);transform-origin:100% 0;">230.30</div><div class="t" style="right:291.70px;top:288.96px;font-size:6.49px;color:#1a1a1a;-webkit-text-stroke:0.15px #1a1a1a;transform:scaleX(0.940);transform-origin:100% 0;">273,366.10</div><div class="t" style="right:247.60px;top:288.96px;font-size:6.49px;color:#1a1a1a;-webkit-text-stroke:0.15px #1a1a1a;transform:scaleX(0.940);transform-origin:100% 0;">0.00</div><div class="t" style="right:204.20px;top:288.96px;font-size:6.49px;color:#1a1a1a;-webkit-text-stroke:0.15px #1a1a1a;transform:scaleX(0.940);transform-origin:100% 0;">273,366.10</div><div class="t" style="left:533.70px;top:288.96px;font-size:6.49px;color:#1a1a1a;-webkit-text-stroke:0.15px #1a1a1a;transform:scaleX(0.940);transform-origin:0 0;">20100</div><div class="t" style="left:576.90px;top:288.96px;font-size:6.49px;color:#1a1a1a;-webkit-text-stroke:0.15px #1a1a1a;transform:scaleX(0.940);transform-origin:0 0;">Inventory Purchase Accrual</div><div class="t" style="left:673.00px;top:288.96px;font-size:6.49px;color:#1a1a1a;-webkit-text-stroke:0.15px #1a1a1a;transform:scaleX(0.940);transform-origin:0 0;">CON-000</div><svg class="r" style="left:23.60px;top:302.90px" width="4" height="6.2" viewBox="0 0 4 6.2"><path d="M0.8 1.6 V4.4 A1.2 1.2 0 0 0 3.2 4.4 V1.6 A1.2 1.2 0 0 0 0.8 1.6 M2 1.8 V4.0" fill="none" stroke="#555" stroke-width="0.8"/></svg><svg class="r" style="left:33.70px;top:302.70px" width="6.5" height="6.5" viewBox="0 0 6.5 6.5"><path d="M0.5 0.5 H3.8 L5.8 2.5 V6 H0.5 Z M3.8 0.5 V2.5 H5.8" fill="none" stroke="#555" stroke-width="0.7"/></svg><div class="t" style="left:43.60px;top:301.56px;font-size:6.49px;color:#1a1a1a;-webkit-text-stroke:0.15px #1a1a1a;transform:scaleX(0.940);transform-origin:0 0;">PRODWHOLE</div><div class="t" style="left:95.90px;top:301.56px;font-size:6.49px;color:#2f84d4;-webkit-text-stroke:0.15px #2f84d4;transform:scaleX(0.940);transform-origin:0 0;">CONWEIGHT1</div><div class="t" style="left:148.70px;top:301.56px;font-size:6.49px;color:#1a1a1a;-webkit-text-stroke:0.15px #1a1a1a;transform:scaleX(0.940);transform-origin:0 0;">Bowflex Adjustable Dumbbells</div><div class="t" style="right:422.30px;top:301.56px;font-size:6.49px;color:#1a1a1a;-webkit-text-stroke:0.15px #1a1a1a;transform:scaleX(0.940);transform-origin:100% 0;">775.00</div><div class="t" style="left:315.20px;top:301.56px;font-size:6.49px;color:#1a1a1a;-webkit-text-stroke:0.15px #1a1a1a;transform:scaleX(0.940);transform-origin:0 0;">EA</div><div class="t" style="right:335.50px;top:301.56px;font-size:6.49px;color:#1a1a1a;-webkit-text-stroke:0.15px #1a1a1a;transform:scaleX(0.940);transform-origin:100% 0;">209.30</div><div class="t" style="right:291.70px;top:301.56px;font-size:6.49px;color:#1a1a1a;-webkit-text-stroke:0.15px #1a1a1a;transform:scaleX(0.940);transform-origin:100% 0;">162,207.50</div><div class="t" style="right:247.60px;top:301.56px;font-size:6.49px;color:#1a1a1a;-webkit-text-stroke:0.15px #1a1a1a;transform:scaleX(0.940);transform-origin:100% 0;">0.00</div><div class="t" style="right:204.20px;top:301.56px;font-size:6.49px;color:#1a1a1a;-webkit-text-stroke:0.15px #1a1a1a;transform:scaleX(0.940);transform-origin:100% 0;">162,207.50</div><div class="t" style="left:533.70px;top:301.56px;font-size:6.49px;color:#1a1a1a;-webkit-text-stroke:0.15px #1a1a1a;transform:scaleX(0.940);transform-origin:0 0;">20100</div><div class="t" style="left:576.90px;top:301.56px;font-size:6.49px;color:#1a1a1a;-webkit-text-stroke:0.15px #1a1a1a;transform:scaleX(0.940);transform-origin:0 0;">Inventory Purchase Accrual</div><div class="t" style="left:673.00px;top:301.56px;font-size:6.49px;color:#1a1a1a;-webkit-text-stroke:0.15px #1a1a1a;transform:scaleX(0.940);transform-origin:0 0;">CON-000</div><svg class="r" style="left:12.40px;top:289.90px" width="4.2" height="5" viewBox="0 0 4.2 5"><path d="M0.6 0.3 L3.5 2.5 L0.6 4.7" fill="none" stroke="#444" stroke-width="0.95"/></svg><div class="r" style="left:10.00px;top:496.00px;width:711.00px;height:3.30px;background:#efefef"></div><div class="r" style="left:10.00px;top:496.00px;width:392.00px;height:3.30px;background:#c9c9c9;border-radius:1.5px"></div><div class="r" style="left:0.00px;top:0.00px;width:734.00px;height:1.00px;background:#0f5a78"></div><div class="r" style="left:0.00px;top:0.00px;width:1.20px;height:501.00px;background:#17607e"></div><div class="r" style="left:732.60px;top:0.00px;width:1.40px;height:501.00px;background:#0f5a78"></div><div class="r" style="left:0.00px;top:499.60px;width:734.00px;height:1.40px;background:#0f5a78"></div></body></html>
